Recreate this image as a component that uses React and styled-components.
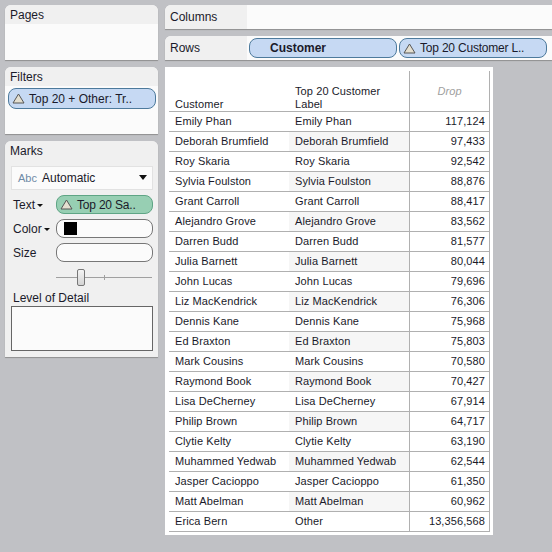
import React from 'react'
import styled, { createGlobalStyle } from 'styled-components'

const rows = [
  ['Emily Phan', 'Emily Phan', '117,124'],
  ['Deborah Brumfield', 'Deborah Brumfield', '97,433'],
  ['Roy Skaria', 'Roy Skaria', '92,542'],
  ['Sylvia Foulston', 'Sylvia Foulston', '88,876'],
  ['Grant Carroll', 'Grant Carroll', '88,417'],
  ['Alejandro Grove', 'Alejandro Grove', '83,562'],
  ['Darren Budd', 'Darren Budd', '81,577'],
  ['Julia Barnett', 'Julia Barnett', '80,044'],
  ['John Lucas', 'John Lucas', '79,696'],
  ['Liz MacKendrick', 'Liz MacKendrick', '76,306'],
  ['Dennis Kane', 'Dennis Kane', '75,968'],
  ['Ed Braxton', 'Ed Braxton', '75,803'],
  ['Mark Cousins', 'Mark Cousins', '70,580'],
  ['Raymond Book', 'Raymond Book', '70,427'],
  ['Lisa DeCherney', 'Lisa DeCherney', '67,914'],
  ['Philip Brown', 'Philip Brown', '64,717'],
  ['Clytie Kelty', 'Clytie Kelty', '63,190'],
  ['Muhammed Yedwab', 'Muhammed Yedwab', '62,544'],
  ['Jasper Cacioppo', 'Jasper Cacioppo', '61,350'],
  ['Matt Abelman', 'Matt Abelman', '60,962'],
  ['Erica Bern', 'Other', '13,356,568'],
]

const GlobalStyle = createGlobalStyle`
  html, body {
    margin: 0;
    padding: 0;
    background: #c0c1c5;
  }
  * { box-sizing: border-box; }
`

const Page = styled.div`
  width: 552px;
  height: 552px;
  overflow: hidden;
  padding: 5px 0 0 5px;
  display: flex;
  gap: 7px;
  font-family: "Liberation Sans", Arial, sans-serif;
  font-size: 12px;
  color: #1a1a2a;
`

const Sidebar = styled.aside`
  width: 153px;
  flex: none;
  display: flex;
  flex-direction: column;
  gap: 7px;
`

const Panel = styled.section`
  height: ${p => p.$height}px;
  background: ${p => p.$plain ? '#f0f0f0' : '#fbfbfb'};
  border-radius: 6px 6px 0 0;
  box-shadow: 0 1px 1px #8f8f8f;
`

const PanelTitle = styled.h2`
  margin: 0;
  height: 19px;
  padding: 3px 0 0 5px;
  background: #f0f0f0;
  border-radius: 6px 6px 0 0;
  font-size: 12px;
  font-weight: normal;
  line-height: 15px;
`

const Pill = styled.div`
  display: flex;
  align-items: center;
  height: ${p => p.$height || 21}px;
  width: ${p => p.$width ? p.$width + 'px' : 'auto'};
  flex: ${p => p.$width ? 'none' : '1'};
  padding-left: ${p => p.$pad || 3}px;
  gap: 4px;
  background: ${p => p.$bg || '#c6d9f3'};
  border: 1px solid ${p => p.$line || '#4d7a9c'};
  border-radius: 8px;
  font-size: 12px;
  font-weight: ${p => p.$bold ? 'bold' : 'normal'};
  letter-spacing: ${p => p.$tight ? '-0.2px' : '0'};
  white-space: nowrap;
`

const FilterSlot = styled.div`
  padding: 2px 2px 0 3px;
`

const MarkType = styled.div`
  margin: 6px 5px 0 6px;
  height: 24px;
  padding: 0 5px 1px 6px;
  display: flex;
  align-items: center;
  background: #fbfbfb;
  border: 1px solid #e2e2e2;
`

const AbcTag = styled.span`
  color: #6f8aa6;
  font-size: 11px;
  width: 24px;
`

const Arrow = styled.span`
  margin-left: auto;
  width: 0;
  height: 0;
  border-left: 4px solid transparent;
  border-right: 4px solid transparent;
  border-top: 5px solid #111;
`

const MarkRow = styled.div`
  display: flex;
  align-items: center;
  height: 19px;
  margin: 5px 5px 0 8px;
`

const MarkLabel = styled.span`
  width: 43px;
  flex: none;
  padding-top: 1px;
  display: flex;
  align-items: center;
  gap: 2px;
`

const SmallArrow = styled.span`
  width: 0;
  height: 0;
  border-left: 3px solid transparent;
  border-right: 3px solid transparent;
  border-top: 3px solid #111;
`

const Swatch = styled.span`
  width: 13px;
  height: 13px;
  background: #000;
`

const SliderRow = styled.div`
  position: relative;
  margin: 7px 6px 0 51px;
  height: 17px;
  display: flex;
  align-items: center;
`

const SliderTrack = styled.div`
  width: 96px;
  height: 1px;
  background: #a0a0a0;
`

const SliderTick = styled.span`
  position: absolute;
  left: 48px;
  top: 6px;
  width: 1px;
  height: 5px;
  background: #a0a0a0;
`

const SliderThumb = styled.span`
  position: absolute;
  left: 21px;
  top: 0;
  width: 8px;
  height: 17px;
  background: linear-gradient(#f4f4f4, #d4d4d4);
  border: 1px solid #777;
  border-radius: 2px;
`

const DetailLabel = styled.div`
  margin: 5px 0 0 8px;
  line-height: 14px;
`

const DetailBox = styled.div`
  margin: 1px 5px 0 6px;
  height: 45px;
  background: #fbfbfb;
  border: 1px solid #666;
`

const Main = styled.main`
  width: 387px;
  flex: none;
  display: flex;
  flex-direction: column;
  gap: 7px;
`

const Shelf = styled.div`
  display: flex;
  height: 24px;
  background: #fbfbfb;
  border-radius: 6px 0 0 0;
  box-shadow: 0 1px 1px #8f8f8f;
`

const ShelfLabel = styled.div`
  width: 82px;
  flex: none;
  padding-left: 5px;
  display: flex;
  align-items: center;
  background: #f0f0f0;
  border-radius: 6px 0 0 0;
`

const ShelfPills = styled.div`
  display: flex;
  align-items: center;
  gap: 2px;
  padding-left: 2px;
`

const Sheet = styled.div`
  width: 328px;
  height: 468px;
  background: #fff;
  padding: 4px 3px 4px 4px;
`

const Table = styled.div`
  width: 321px;
  display: grid;
  grid-template-columns: 120px 120px 80px;
  grid-template-rows: 41px repeat(21, 20px);
  border-right: 1px solid #b0b0b0;
  font-size: 11px;
  letter-spacing: 0.1px;
`

const HeadCell = styled.div`
  padding: ${p => p.$top}px 6px 0 6px;
  line-height: 13px;
  border-bottom: 1px solid #b0b0b0;
`

const DropHead = styled(HeadCell)`
  text-align: center;
  padding-left: 0;
  padding-right: 0;
  color: #a0a0a0;
  font-style: italic;
  border-left: 1px solid #b0b0b0;
`

const Cell = styled.div`
  padding: 0 6px 1px 6px;
  display: flex;
  align-items: center;
  white-space: nowrap;
  background: ${p => p.$shade ? '#f6f6f6' : '#fff'};
  border-bottom: 1px solid #b0b0b0;
`

const NumberCell = styled(Cell)`
  justify-content: flex-end;
  padding-right: 4px;
  border-left: 1px solid #b0b0b0;
`

const Triangle = () => (
  <svg width="13" height="11" viewBox="0 0 13 11">
    <path d="M6.5 1 L12 10 L1 10 Z" fill="#e4dfd0" stroke="#555" strokeWidth="1" />
  </svg>
)

const App = () => (
  <>
    <GlobalStyle />
    <Page>
      <Sidebar>
        <Panel $height={55}>
          <PanelTitle>Pages</PanelTitle>
        </Panel>
        <Panel $height={67}>
          <PanelTitle>Filters</PanelTitle>
          <FilterSlot>
            <Pill><Triangle />Top 20 + Other: Tr..</Pill>
          </FilterSlot>
        </Panel>
        <Panel $height={216} $plain>
          <PanelTitle>Marks</PanelTitle>
          <MarkType>
            <AbcTag>Abc</AbcTag>Automatic<Arrow />
          </MarkType>
          <MarkRow>
            <MarkLabel>Text<SmallArrow /></MarkLabel>
            <Pill $bg="#97cfb3" $line="#5fa585" $height={19} $tight><Triangle />Top 20 Sa..</Pill>
          </MarkRow>
          <MarkRow>
            <MarkLabel>Color<SmallArrow /></MarkLabel>
            <Pill $bg="#fbfbfb" $line="#777" $height={19} $pad={7}><Swatch /></Pill>
          </MarkRow>
          <MarkRow>
            <MarkLabel>Size</MarkLabel>
            <Pill $bg="#fbfbfb" $line="#777" $height={19} />
          </MarkRow>
          <SliderRow>
            <SliderTrack />
            <SliderTick />
            <SliderThumb />
          </SliderRow>
          <DetailLabel>Level of Detail</DetailLabel>
          <DetailBox />
        </Panel>
      </Sidebar>
      <Main>
        <Shelf>
          <ShelfLabel>Columns</ShelfLabel>
        </Shelf>
        <Shelf>
          <ShelfLabel>Rows</ShelfLabel>
          <ShelfPills>
            <Pill $width={148} $height={20} $pad={20} $bold>Customer</Pill>
            <Pill $width={148} $height={20} $tight><Triangle />Top 20 Customer L..</Pill>
          </ShelfPills>
        </Shelf>
        <Sheet>
          <Table>
            <HeadCell $top={27}>Customer</HeadCell>
            <HeadCell $top={14}>Top 20 Customer Label</HeadCell>
            <DropHead $top={14}>Drop</DropHead>
            {rows.map((r, i) => (
              <React.Fragment key={r[0]}>
                <Cell>{r[0]}</Cell>
                <Cell $shade={i % 2 === 1}>{r[1]}</Cell>
                <NumberCell>{r[2]}</NumberCell>
              </React.Fragment>
            ))}
          </Table>
        </Sheet>
      </Main>
    </Page>
  </>
)

export default App
